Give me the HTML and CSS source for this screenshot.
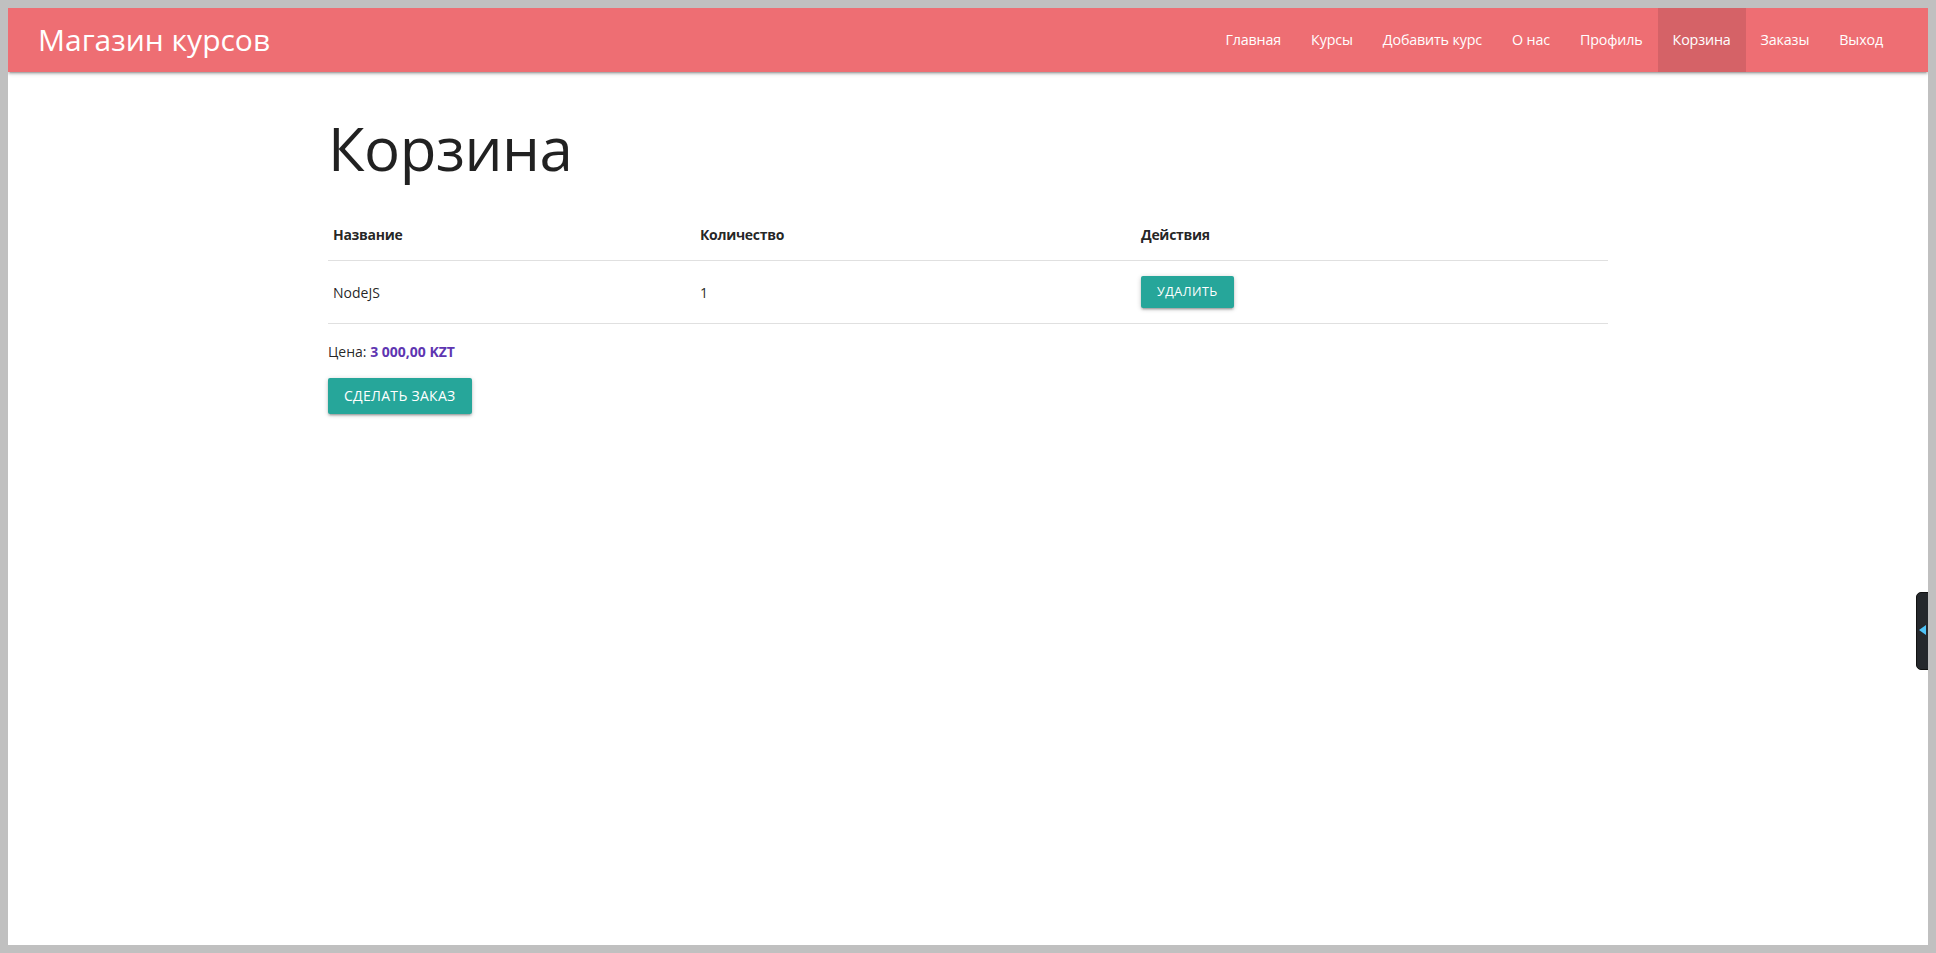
FILE: index.html
```html
<!DOCTYPE html>
<html lang="ru">
<head>
<meta charset="utf-8">
<title>Корзина</title>
<link rel="stylesheet" href="styles.css">
</head>
<body>
<nav class="nav">
  <div class="nav-wrapper">
    <a class="brand-logo" href="#">Магазин курсов</a>
    <ul class="nav-links">
      <li><a href="#">Главная</a></li>
      <li><a href="#">Курсы</a></li>
      <li><a href="#">Добавить курс</a></li>
      <li><a href="#">О нас</a></li>
      <li><a href="#">Профиль</a></li>
      <li class="active"><a href="#">Корзина</a></li>
      <li><a href="#">Заказы</a></li>
      <li><a href="#">Выход</a></li>
    </ul>
  </div>
</nav>
<main class="container">
  <h1 class="page-title">Корзина</h1>
  <table class="cart-table">
    <thead>
      <tr>
        <th class="col-name">Название</th>
        <th class="col-qty">Количество</th>
        <th class="col-act">Действия</th>
      </tr>
    </thead>
    <tbody>
      <tr>
        <td>NodeJS</td>
        <td>1</td>
        <td><button class="btn btn-small">Удалить</button></td>
      </tr>
    </tbody>
  </table>
  <p class="total">Цена: <strong class="price">3 000,00 KZT</strong></p>
  <button class="btn">Сделать заказ</button>
</main>
<div class="side-tab"><span class="side-arrow"></span></div>
</body>
</html>
```

FILE: styles.css
```css
html {
  background: #c0c0c0;
  font-size: 15px;
}
body {
  margin: 8px;
  background: #fff;
  min-height: 937px;
  font-family: "Open Sans", "Noto Sans", sans-serif;
  color: rgba(0, 0, 0, 0.87);
  line-height: 1.5;
  position: relative;
  overflow: hidden;
}
.nav {
  background: #ee6e73;
  height: 64px;
  line-height: 64px;
  color: #fff;
  box-shadow: 0 2px 2px 0 rgba(0,0,0,0.14), 0 3px 1px -2px rgba(0,0,0,0.12), 0 1px 5px 0 rgba(0,0,0,0.2);
}
.nav-wrapper {
  display: flex;
  justify-content: space-between;
  padding: 0 30px;
  height: 100%;
}
.brand-logo {
  color: #fff;
  text-decoration: none;
  font-size: 30px;
  letter-spacing: 0;
}
.nav-links {
  display: flex;
  list-style: none;
  margin: 0;
  padding: 0;
}
.nav-links a {
  display: block;
  padding: 0 15px;
  color: #fff;
  text-decoration: none;
  font-size: 14.3px;
  letter-spacing: -0.15px;
}
.nav-links .active {
  background: rgba(0, 0, 0, 0.1);
}
.container {
  width: 1280px;
  margin: 0 auto;
}
.page-title {
  font-size: 60px;
  font-weight: 400;
  line-height: 69px;
  margin: 42px 0 26px;
  letter-spacing: -0.5px;
}
.cart-table {
  width: 100%;
  border-collapse: collapse;
  font-size: 14px;
}
.cart-table th,
.cart-table td {
  text-align: left;
  padding: 15px 5px;
  vertical-align: middle;
}
.cart-table th {
  font-weight: 700;
  letter-spacing: -0.3px;
}
.cart-table tr {
  border-bottom: 1px solid rgba(0, 0, 0, 0.12);
}
.col-name { width: 357px; }
.col-qty { width: 431px; }
.total {
  margin: 17px 0 15px;
  font-size: 14px;
  line-height: 22px;
}
.price {
  color: #5e35b1;
  font-weight: 700;
}
.btn {
  display: inline-block;
  height: 36px;
  line-height: 36px;
  padding: 0 16px;
  border: none;
  border-radius: 2px;
  background: #26a69a;
  color: #fff;
  font-family: inherit;
  font-size: 14px;
  letter-spacing: 0.3px;
  text-transform: uppercase;
  cursor: pointer;
  box-shadow: 0 2px 2px 0 rgba(0,0,0,0.14), 0 3px 1px -2px rgba(0,0,0,0.12), 0 1px 5px 0 rgba(0,0,0,0.2);
}
.btn-small {
  height: 32px;
  line-height: 32px;
  font-size: 12.5px;
  letter-spacing: 0.5px;
}
.side-tab {
  position: absolute;
  top: 584px;
  right: -6px;
  width: 16px;
  height: 76px;
  background: #25282c;
  border: 1px solid #111;
  border-radius: 5px 0 0 5px;
}
.side-arrow {
  position: absolute;
  top: 32px;
  left: 2px;
  width: 0;
  height: 0;
  border-top: 5px solid transparent;
  border-bottom: 5px solid transparent;
  border-right: 7px solid #4fc3f7;
}
```
